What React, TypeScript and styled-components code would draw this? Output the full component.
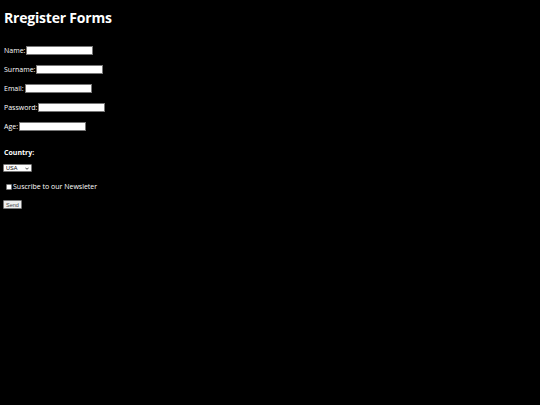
import { FC } from "react";
import styled, { createGlobalStyle } from "styled-components";

const GlobalStyle = createGlobalStyle`
  html, body {
    margin: 0;
    background-color: #000000;
  }
  body {
    padding: 0 4px;
    font-family: "Open Sans", "Noto Sans", sans-serif;
    color: #ffffff;
  }
`;

const fields = [
  { label: "Name:", type: "text" },
  { label: "Surname:", type: "text" },
  { label: "Email:", type: "email" },
  { label: "Password:", type: "password" },
  { label: "Age:", type: "number" },
];

const App: FC = () => {
  return (
    <>
      <GlobalStyle />
      <Form onSubmit={(e) => e.preventDefault()}>
        <Title>Rregister Forms</Title>
        <Fields>
          {fields.map((f) => (
            <FieldRow key={f.label}>
              <Label>{f.label}</Label>
              <TextInput type={f.type} />
            </FieldRow>
          ))}
        </Fields>
        <CountryLabel>Country:</CountryLabel>
        <SelectWrap>
          <Select defaultValue="USA">
            <option value="USA">USA</option>
            <option value="Canada">Canada</option>
            <option value="Mexico">Mexico</option>
          </Select>
          <Chevron viewBox="0 0 10 6" aria-hidden="true">
            <path d="M1 1l4 4 4-4" fill="none" stroke="#000" strokeWidth="1.8" />
          </Chevron>
        </SelectWrap>
        <CheckRow>
          <Checkbox type="checkbox" />
          <span>Suscribe to our Newsleter</span>
        </CheckRow>
        <SendButton type="submit">Send</SendButton>
      </Form>
    </>
  );
};

export default App;

const Form = styled.form`
  display: flex;
  flex-direction: column;
  align-items: flex-start;
`;

const Title = styled.h1`
  margin: 6px 0 0;
  font-size: 14px;
  font-weight: 700;
  line-height: 24px;
  letter-spacing: -0.2px;
`;

const Fields = styled.div`
  display: flex;
  flex-direction: column;
  row-gap: 10px;
  margin-top: 16px;
`;

const FieldRow = styled.div`
  display: flex;
  align-items: center;
  column-gap: 1px;
  height: 9px;
  font-size: 7px;
`;

const Label = styled.label`
  line-height: 9px;
`;

const TextInput = styled.input`
  box-sizing: border-box;
  width: 67px;
  height: 9px;
  padding: 0;
  border: 1px solid #767676;
  background: #ffffff;
`;

const CountryLabel = styled.label`
  margin-top: 17px;
  font-size: 7px;
  font-weight: 700;
  line-height: 9px;
`;

const SelectWrap = styled.div`
  position: relative;
  margin-top: 7px;
  margin-left: -1px;
  width: 29px;
  height: 8px;
`;

const Select = styled.select`
  appearance: none;
  box-sizing: border-box;
  display: block;
  width: 29px;
  height: 8px;
  padding: 0 0 0 2px;
  font-family: "Liberation Sans", sans-serif;
  font-size: 5.5px;
  line-height: 6px;
  border: 1px solid #767676;
  border-radius: 1px;
  background: #ffffff;
  color: #000000;
  outline: none;
`;

const Chevron = styled.svg`
  position: absolute;
  right: 3px;
  top: 3px;
  width: 4px;
  height: 3px;
  pointer-events: none;
`;

const CheckRow = styled.label`
  display: flex;
  align-items: center;
  column-gap: 1px;
  margin-top: 10px;
  margin-left: 2px;
  font-size: 7px;
  line-height: 9px;
`;

const Checkbox = styled.input`
  appearance: none;
  box-sizing: border-box;
  margin: 0;
  width: 6px;
  height: 6px;
  background: #ffffff;
  border: 1px solid #767676;
  border-radius: 1px;
`;

const SendButton = styled.button`
  box-sizing: border-box;
  margin-top: 9px;
  margin-left: -1px;
  width: 19px;
  height: 9px;
  padding: 0;
  font-family: "Liberation Sans", sans-serif;
  font-size: 5.5px;
  line-height: 6px;
  color: #444444;
  background: #efefef;
  border: 1px solid #767676;
  border-radius: 1px;
`;
